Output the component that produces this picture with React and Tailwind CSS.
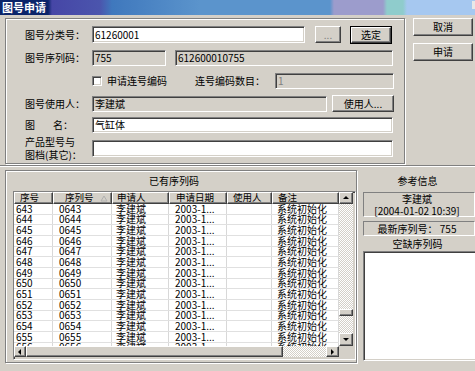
import React from "react";

// classic win32 edges
const sunken =
  "border border-t-[#808080] border-l-[#808080] border-r-white border-b-white shadow-[inset_1px_1px_0_#404040,inset_-1px_-1px_0_#d4d0c8]";
const raised =
  "border border-t-white border-l-white border-r-[#404040] border-b-[#404040] shadow-[inset_-1px_-1px_0_#808080]";
const etched = "border border-[#808080] shadow-[inset_1px_1px_0_#fff,1px_1px_0_#fff]";
const dither = "bg-[repeating-conic-gradient(#ffffff_0_25%,#d4d0c8_0_50%)] bg-[length:2px_2px]";

const columns = [
  { w: "w-[39px]", title: "序号", hp: "pl-[5px]", cp: "pl-[2px]", key: "no" },
  { w: "w-[59px]", title: "序列号", hp: "pl-[11px]", cp: "pl-[6px]", key: "serial", sort: true },
  { w: "w-[57px]", title: "申请人", hp: "pl-[4px]", cp: "pl-[4px]", key: "user" },
  { w: "w-[58px]", title: "申请日期", hp: "pl-[6px]", cp: "pl-[6px]", key: "date" },
  { w: "w-[45px]", title: "使用人", hp: "pl-[5px]", cp: "pl-[5px]", key: "owner" },
  { w: "w-[67px]", title: "备注", hp: "pl-[5px]", cp: "pl-[5px]", key: "note" },
];

const rows = Array.from({ length: 14 }, (_, i) => {
  const n = 643 + i;
  return {
    no: String(n),
    serial: "0" + n,
    user: "李建斌",
    date: "2003-1...",
    owner: "",
    note: "系统初始化",
  };
});

const Arrow = ({ dir }) => {
  const pts = {
    up: "1,5 4,2 7,5",
    down: "1,2 4,5 7,2",
    left: "5,1 2,4 5,7",
    right: "2,1 5,4 2,7",
  };
  return (
    <svg width="8" height="8" viewBox="0 0 8 8">
      <polygon points={pts[dir]} fill="#000" />
    </svg>
  );
};

const Label = ({ children }) => (
  <div className="w-[67px] shrink-0 whitespace-nowrap">{children}</div>
);

const Button = ({ className, children }) => (
  <div className={`${raised} flex items-center justify-center bg-[#d4d0c8] ${className}`}>
    {children}
  </div>
);

export default function App() {
  return (
    <div className="w-[475px] h-[371px] overflow-hidden bg-[#d4d0c8] flex flex-col font-['Noto_Sans_CJK_SC','Noto_Sans',sans-serif] text-[10px] leading-none text-black">
      {/* title bar */}
      <div className="h-[15px] shrink-0 flex items-center justify-between bg-[linear-gradient(to_right,#0a246a_0px,#0a246a_48px,#4646a6_52px,#4b55ad_100px,#3f78bd_112px,#5b94cc_200px,#5b94cc_330px,#9c9ccc_334px,#9c9ccc_383px,#8fcccc_387px,#8fcccc_403px,#a6c8f0_407px)]">
        <span className="pl-[2px] text-[11px] font-bold text-white">图号申请</span>
        <div className="mb-[6px] h-[8px] w-[3px] bg-[#e8e8e8]" />
      </div>

      {/* top part */}
      <div className="flex h-[150px] shrink-0">
        <div className={`${etched} ml-[5px] mt-[3px] h-[146px] w-[400px] flex flex-col pl-[19px]`}>
          <div className="mt-[7px] flex h-[17px] items-center">
            <Label>图号分类号：</Label>
            <div className={`${sunken} h-[17px] w-[213px] bg-white flex items-center pl-[2px]`}>61260001</div>
            <Button className="ml-[10px] h-[17px] w-[26px] text-[#808080]">...</Button>
            <div className="ml-[9px] h-[18px] w-[42px] border border-black">
              <Button className="h-full w-full">选定</Button>
            </div>
          </div>

          <div className="mt-[7px] flex h-[16px] items-center">
            <Label>图号序列码：</Label>
            <div className={`${sunken} h-[16px] w-[74px] flex items-center pl-[2px]`}>755</div>
            <div className={`${sunken} ml-[9px] h-[16px] w-[218px] flex items-center pl-[2px]`}>612600010755</div>
          </div>

          <div className="mt-[7px] flex h-[16px] items-center">
            <div className="w-[67px] shrink-0" />
            <div className={`${sunken} h-[10px] w-[10px] bg-white`} />
            <span className="ml-[5px]">申请连号编码</span>
            <span className="ml-[28px]">连号编码数目：</span>
            <div className={`${sunken} ml-[10px] h-[16px] w-[119px] flex items-center pl-[2px] text-[#808080]`}>1</div>
          </div>

          <div className="mt-[6px] flex h-[17px] items-center">
            <Label>图号使用人：</Label>
            <div className={`${sunken} h-[16px] w-[235px] flex items-center pl-[2px]`}>李建斌</div>
            <Button className="ml-[5px] h-[17px] w-[62px]">使用人...</Button>
          </div>

          <div className="mt-[5px] flex h-[16px] items-center">
            <Label>
              图<span className="ml-[18px]">名：</span>
            </Label>
            <div className={`${sunken} h-[16px] w-[301px] bg-white flex items-center pl-[2px]`}>气缸体</div>
          </div>

          <div className="mt-[6px] flex h-[18px] items-center">
            <div className="w-[67px] shrink-0 flex flex-col gap-[3px] whitespace-nowrap">
              <span>产品型号与</span>
              <span>图档(其它)：</span>
            </div>
            <div className={`${sunken} h-[17px] w-[301px] bg-white`} />
          </div>
        </div>

        <div className="ml-[8px] mt-[3px] flex w-[60px] flex-col gap-[7px]">
          <Button className="h-[18px]">取消</Button>
          <Button className="h-[18px]">申请</Button>
        </div>
      </div>

      {/* divider */}
      <div className="h-[2px] shrink-0 border-t border-t-[#808080] border-b border-b-white" />

      {/* bottom part */}
      <div className="mt-[3px] flex">
        <div className={`${etched} ml-[5px] h-[193px] w-[352px] flex flex-col`}>
          <div className="flex h-[20px] items-center justify-center pr-[14px]">已有序列码</div>
          <div className={`${sunken} ml-[7px] h-[169px] w-[343px] flex flex-col`}>
            <div className="flex h-[154px]">
              <div className="w-[325px] flex flex-col bg-white overflow-hidden">
                <div className="flex h-[12px] shrink-0 text-[9.5px]">
                  {columns.map((c) => (
                    <div
                      key={c.key}
                      className={`${raised} ${c.w} ${c.hp} flex shrink-0 items-center whitespace-nowrap bg-[#d4d0c8]`}
                    >
                      {c.title}
                      {c.sort && (
                        <svg className="ml-[6px] shrink-0" width="8" height="7" viewBox="0 0 8 7">
                          <polygon points="4,1 7,6 1,6" fill="none" stroke="#b0b0b0" />
                        </svg>
                      )}
                    </div>
                  ))}
                </div>
                {rows.map((r) => (
                  <div key={r.no} className="flex h-[10.67px] shrink-0 border-b border-b-[#e0e0e0]">
                    {columns.map((c) => (
                      <div
                        key={c.key}
                        className={`${c.w} ${c.cp} flex shrink-0 items-center border-r border-r-[#d8d8d8] whitespace-nowrap`}
                      >
                        {r[c.key]}
                      </div>
                    ))}
                  </div>
                ))}
              </div>
              {/* vertical scrollbar */}
              <div className={`w-[14px] flex flex-col ${dither}`}>
                <Button className="h-[12px] shrink-0"><Arrow dir="up" /></Button>
                <div className="h-[105px]" />
                <Button className="h-[7px] shrink-0" />
                <div className="h-[17px]" />
                <Button className="h-[13px] shrink-0"><Arrow dir="down" /></Button>
              </div>
            </div>
            {/* horizontal scrollbar */}
            <div className="flex h-[11px]">
              <div className={`w-[325px] flex ${dither}`}>
                <Button className="w-[12px] shrink-0"><Arrow dir="left" /></Button>
                <Button className="w-[257px] shrink-0" />
                <div className="w-[43px]" />
                <Button className="w-[13px] shrink-0"><Arrow dir="right" /></Button>
              </div>
              <div className="w-[14px] bg-[#d4d0c8]" />
            </div>
          </div>
        </div>

        <div className="ml-[6px] w-[115px] flex flex-col">
          <div className="flex h-[22px] items-center justify-center pr-[6px]">参考信息</div>
          <div className="h-[25px] w-[112px] border border-t-[#808080] border-l-[#808080] border-r-white border-b-white flex flex-col items-center justify-center gap-[2px] pr-[4px]">
            <span>李建斌</span>
            <span>[2004-01-02 10:39]</span>
          </div>
          <div className="mt-[4px] h-[15px] w-[112px] border border-t-[#808080] border-l-[#808080] border-r-white border-b-white flex items-center justify-center pr-[4px]">
            最新序列号： 755
          </div>
          <div className="flex h-[15px] items-center justify-center pr-[6px]">空缺序列码</div>
          <div className={`${sunken} h-[110px] w-[115px] bg-white`} />
        </div>
      </div>
    </div>
  );
}
